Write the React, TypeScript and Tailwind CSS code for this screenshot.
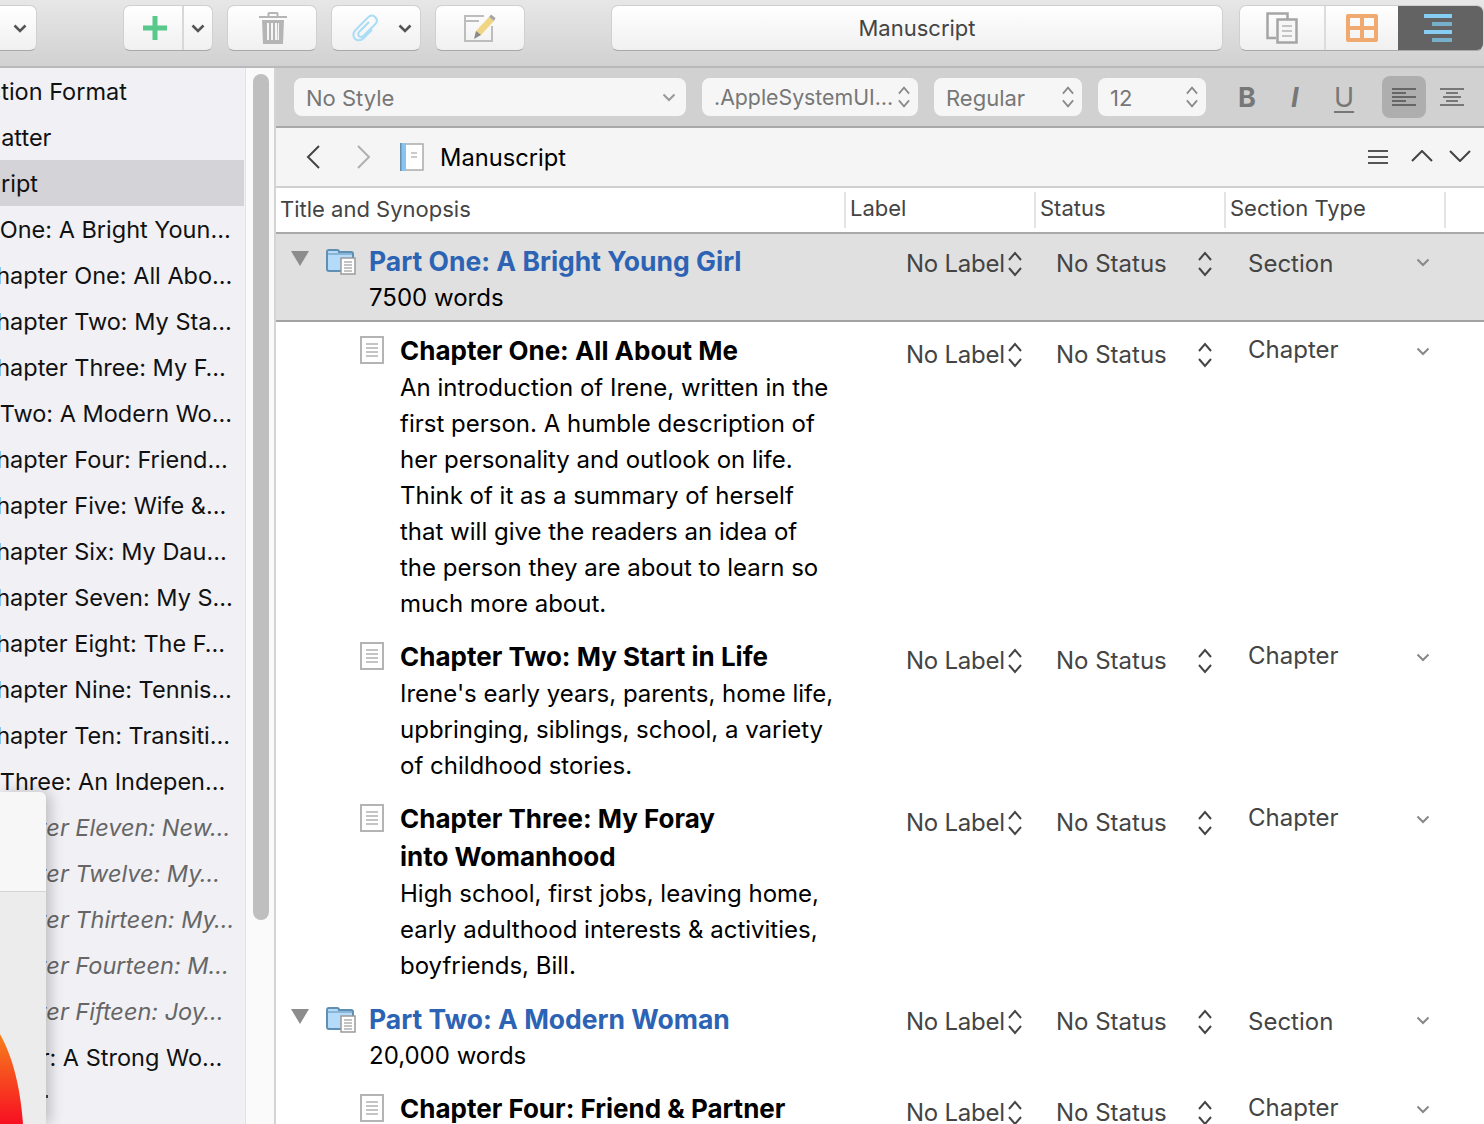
import type { ReactNode } from "react";

const sidebarRows: { text: string; ml: string; italic?: boolean; selected?: boolean }[] = [
  { text: "Section Format", ml: "ml-[-41px]" },
  { text: "Front Matter", ml: "ml-[-84px]" },
  { text: "Manuscript", ml: "ml-[-87px]", selected: true },
  { text: "Part One: A Bright Youn…", ml: "ml-[-52px]" },
  { text: "Chapter One: All Abo…", ml: "ml-[-21px]" },
  { text: "Chapter Two: My Sta…", ml: "ml-[-21px]" },
  { text: "Chapter Three: My F…", ml: "ml-[-21px]" },
  { text: "Part Two: A Modern Wo…", ml: "ml-[-52px]" },
  { text: "Chapter Four: Friend…", ml: "ml-[-21px]" },
  { text: "Chapter Five: Wife &…", ml: "ml-[-21px]" },
  { text: "Chapter Six: My Dau…", ml: "ml-[-21px]" },
  { text: "Chapter Seven: My S…", ml: "ml-[-21px]" },
  { text: "Chapter Eight: The F…", ml: "ml-[-21px]" },
  { text: "Chapter Nine: Tennis…", ml: "ml-[-21px]" },
  { text: "Chapter Ten: Transiti…", ml: "ml-[-21px]" },
  { text: "Part Three: An Indepen…", ml: "ml-[-52px]" },
  { text: "Chapter Eleven: New…", ml: "ml-[-21px]", italic: true },
  { text: "Chapter Twelve: My…", ml: "ml-[-21px]", italic: true },
  { text: "Chapter Thirteen: My…", ml: "ml-[-21px]", italic: true },
  { text: "Chapter Fourteen: M…", ml: "ml-[-21px]", italic: true },
  { text: "Chapter Fifteen: Joy…", ml: "ml-[-21px]", italic: true },
  { text: "Part Four: A Strong Wo…", ml: "ml-[-52px]" },
];

function Chevron({ className = "", thick }: { className?: string; thick?: boolean }) {
  return (
    <svg width="14" height="9" viewBox="0 0 14 9" fill="none" className={className}>
      <path d="M1.5 1.500 7 7l5.500-5.500" stroke="currentColor" strokeWidth={thick ? 2.6 : 2} />
    </svg>
  );
}

function UpDown({ className = "text-[#444]" }: { className?: string }) {
  return (
    <svg width="16" height="26" viewBox="0 0 16 26" fill="none" className={className}>
      <path d="M2 9l6-7 6 7M2 17l6 7 6-7" stroke="currentColor" strokeWidth="2" />
    </svg>
  );
}

function DocIcon() {
  return (
    <svg width="24" height="28" viewBox="0 0 24 28" fill="none">
      <rect x="1" y="1" width="22" height="26" fill="#fff" stroke="#b4b4b4" strokeWidth="2" />
      <path d="M6 8h12M6 12h12M6 16h12M6 20h12" stroke="#c4c4c4" strokeWidth="2" />
    </svg>
  );
}

function FolderIcon() {
  return (
    <svg width="30" height="28" viewBox="0 0 30 28" fill="none">
      <path d="M1 5a2 2 0 0 1 2-2h8a2 2 0 0 1 2 2h12a2 2 0 0 1 2 2v15a2 2 0 0 1-2 2H3a2 2 0 0 1-2-2z" fill="#b5dbfb" stroke="#5f8fb3" strokeWidth="2" />
      <path d="M2 7h24" stroke="#5f8fb3" strokeWidth="1" />
      <rect x="15" y="11" width="14" height="16" fill="#fff" stroke="#9a9a9a" strokeWidth="1.5" />
      <path d="M18 15h8M18 18h8M18 21h8M18 24h8" stroke="#b0b0b0" strokeWidth="1.5" />
    </svg>
  );
}

function ToolbarButton({ className, children }: { className: string; children: ReactNode }) {
  return (
    <div className={`h-[46px] shrink-0 flex items-center justify-center rounded-[7px] border border-[#d0d0d0] border-b-[#a9a9a9] bg-gradient-to-b from-white to-[#f0f0f0] ${className}`}>
      {children}
    </div>
  );
}

function FormatSelect({ className, label, labelClass = "", children }: { className: string; label: string; labelClass?: string; children: ReactNode }) {
  return (
    <div className={`h-[38px] shrink-0 flex items-center justify-between rounded-[8px] bg-[#f6f6f6] text-[#777] ${className}`}>
      <span className={`whitespace-nowrap pt-[1px] ${labelClass}`}>{label}</span>
      {children}
    </div>
  );
}

function OutlineRow({
  title,
  lines,
  part,
  type,
  height,
  textTop,
  metaTop,
  typeTop,
  chevTop,
  border,
}: {
  title: string[];
  lines: string[];
  part?: boolean;
  type: string;
  height: string;
  textTop: string;
  metaTop: string;
  typeTop: string;
  chevTop: string;
  border?: boolean;
}) {
  return (
    <div className={`flex ${height} shrink-0 ${part && border ? "bg-[#e0e0e0] border-b-2 border-[#a3a3a3]" : ""}`}>
      <div className={`w-[630px] shrink-0 flex ${textTop} ${part ? "pl-[15px]" : "pl-[84px]"}`}>
        {part ? (
          <>
            <svg width="18" height="16" viewBox="0 0 18 16" className="mt-[9px] shrink-0">
              <path d="M0 0h18L9 15z" fill="#8c8c8c" />
            </svg>
            <div className="ml-[17px] mt-[5px] shrink-0"><FolderIcon /></div>
          </>
        ) : (
          <div className="mt-[4px] shrink-0"><DocIcon /></div>
        )}
        <div className={part ? "ml-[13px]" : "ml-[16px]"}>
          {title.map((t) => (
            <div key={t} className={`h-[38px] leading-[38px] font-bold whitespace-nowrap ${part ? "text-[#2c63b4] text-[26.5px]" : "text-black text-[26px]"}`}>
              {t}
            </div>
          ))}
          {lines.map((l) => (
            <div key={l} className="h-[36px] leading-[36px] text-black whitespace-nowrap">{l}</div>
          ))}
        </div>
      </div>
      <div className={`flex items-start text-[#444] ${metaTop}`}>
        <span className="w-[101px] h-[26px] leading-[26px] whitespace-nowrap tracking-[-0.25px]">No Label</span>
        <UpDown />
        <span className="ml-[33px] w-[141px] h-[26px] leading-[26px] whitespace-nowrap">No Status</span>
        <UpDown />
      </div>
      <div className={`ml-[35px] w-[168px] text-[#444] whitespace-nowrap ${typeTop}`}>{type}</div>
      <Chevron className={`text-[#888] ${chevTop}`} />
    </div>
  );
}

export default function App() {
  return (
    <div className="relative w-[1484px] h-[1124px] overflow-hidden flex flex-col bg-white font-['Inter','Liberation_Sans',sans-serif] text-[24px] leading-none">
      {/* toolbar */}
      <div className="h-[68px] shrink-0 flex items-start pt-[5px] bg-gradient-to-b from-[#e8e7e8] to-[#d2d1d2] border-b-2 border-[#b9b9b9]">
        <ToolbarButton className="w-[44px] ml-[-7px] justify-end pr-[9px] text-[#555]"><Chevron thick /></ToolbarButton>
        <ToolbarButton className="w-[90px] ml-[86px]">
          <div className="w-[60px] flex justify-center border-r-2 border-[#d8d8d8] h-full items-center pl-[4px]">
            <svg width="24" height="24" viewBox="0 0 24 24"><path d="M9.5 0h5v9.500h9.500v5h-9.500v9.500h-5v-9.500h-9.500v-5h9.500z" fill="#58c98a" /></svg>
          </div>
          <div className="flex-1 flex justify-center text-[#555]"><Chevron thick /></div>
        </ToolbarButton>
        <ToolbarButton className="w-[90px] ml-[14px]">
          <svg width="28" height="32" viewBox="0 0 28 32" fill="#b5b5b5" className="ml-[2px]">
            <path d="M10 0h8a1.500 1.500 0 0 1 1.500 1.500V4H28v2H0V4h8.500V1.500A1.500 1.500 0 0 1 10 0zm.5 2v2h7V2z" fillRule="evenodd" />
            <path d="M3 8h22l-1 24H4zM8 11v17h2V11zM12 11v17h2V11zM16 11v17h2V11zM20 11v17h-1.500L19 11z" fillRule="evenodd" />
          </svg>
        </ToolbarButton>
        <ToolbarButton className="w-[90px] ml-[14px]">
          <svg width="26" height="28" viewBox="0 0 26 28" fill="none" className="ml-[12px]">
            <path d="M17 8 7.500 17.500c-1.800 1.800-1.500 3.500-.5 4.500s2.800 1.400 4.500-.3L23 10.500c2.700-2.700 2-5.500.3-7.300s-4.600-2.500-7.300.2L3.500 16c-3 3-2.600 6.700-.6 8.700s5.700 2.400 8.600-.5l8.500-8.500" stroke="#a9dcf6" strokeWidth="2" />
          </svg>
          <Chevron thick className="ml-[20px] text-[#555]" />
        </ToolbarButton>
        <ToolbarButton className="w-[90px] ml-[14px]">
          <svg width="32" height="30" viewBox="0 0 32 30" fill="none">
            <path d="M20 3H1v25h27V13M1 8h14" stroke="#bdbdbd" strokeWidth="2" />
            <path d="M12 18 25 4l5 4-13 14-6 2z" fill="#f0d583" />
            <path d="M25 4l2-2.500 4.500 3.500-1.500 3z" fill="#a5a5a5" />
            <path d="M10 26l2-8 5 4z" fill="#8a8a8a" />
          </svg>
        </ToolbarButton>
        <ToolbarButton className="w-[612px] ml-[86px] text-[22px] text-[#444]">Manuscript</ToolbarButton>
        <div className="ml-[16px] w-[245px] h-[46px] shrink-0 flex rounded-[7px] overflow-hidden border border-[#d0d0d0] border-b-[#a9a9a9] bg-gradient-to-b from-white to-[#f0f0f0]">
          <div className="w-[86px] flex items-center justify-center border-r-2 border-[#dcdcdc]">
            <svg width="32" height="32" viewBox="0 0 32 32" fill="none" stroke="#a5a5a5" strokeWidth="2.500">
              <path d="M10 26H1.500V1.500h20V7" />
              <rect x="11.500" y="7.500" width="19" height="23" fill="#f6f6f6" />
              <path d="M16 14h10M16 19h10M16 24h10" stroke="#c4c4c4" strokeWidth="2" />
            </svg>
          </div>
          <div className="w-[72px] flex items-center justify-center">
            <svg width="32" height="28" viewBox="0 0 32 28"><path d="M2 0h28a2 2 0 0 1 2 2v24a2 2 0 0 1-2 2H2a2 2 0 0 1-2-2V2a2 2 0 0 1 2-2zM4 4v8h10V4zm14 0v8h10V4zM4 16v8h10v-8zm14 0v8h10v-8z" fill="#f0a96f" fillRule="evenodd" /></svg>
          </div>
          <div className="flex-1 flex items-center pl-[26px] bg-[#636363]">
            <svg width="28" height="28" viewBox="0 0 28 28">
              <path d="M0 0h28v4H0z" fill="#85cdf2" />
              <path d="M8 8h20v4H8z" fill="#78afca" />
              <path d="M0 16h28v4H0z" fill="#85cdf2" />
              <path d="M8 24h20v4H8z" fill="#78afca" />
            </svg>
          </div>
        </div>
      </div>

      <div className="flex-1 flex min-h-0">
        {/* binder */}
        <div className="w-[246px] shrink-0 bg-[#f0f0f5] overflow-hidden border-r border-[#e2e2e2] text-[23.5px]">
          {sidebarRows.map((r) => (
            <div key={r.text} className={`h-[46px] mr-[1px] pt-[1px] flex items-center overflow-hidden whitespace-nowrap ${r.selected ? "bg-[#d3d3d8]" : ""} ${r.italic ? "italic text-[#666]" : "text-[#111]"}`}>
              <span className={r.ml}>{r.text}</span>
            </div>
          ))}
          <div className="h-[46px] pl-[46px] pt-[15px]">
            <div className="w-[2px] h-[3px] bg-[#444]" />
          </div>
        </div>
        <div className="w-[30px] shrink-0 bg-[#fafafa] pl-[7px] pt-[6px] border-r-2 border-[#d4d4d4]">
          <div className="w-[16px] h-[846px] rounded-full bg-[#bfbfbf]" />
        </div>

        {/* editor */}
        <div className="flex-1 min-w-0 flex flex-col overflow-hidden">
          <div className="h-[60px] shrink-0 flex items-center pl-[18px] bg-[#d1d1d1] border-b-2 border-[#a8a8a8] text-[22px]">
            <FormatSelect className="w-[392px] pl-[12px] pr-[10px]" label="No Style"><Chevron className="text-[#999]" /></FormatSelect>
            <FormatSelect className="w-[216px] ml-[16px] pl-[12px] pr-[6px]" label=".AppleSystemUI…" labelClass="text-[21.3px]"><UpDown className="text-[#888] scale-[0.85]" /></FormatSelect>
            <FormatSelect className="w-[148px] ml-[16px] pl-[12px] pr-[6px]" label="Regular"><UpDown className="text-[#888] scale-[0.85]" /></FormatSelect>
            <FormatSelect className="w-[108px] ml-[16px] pl-[12px] pr-[6px]" label="12"><UpDown className="text-[#888] scale-[0.85]" /></FormatSelect>
            <span className="ml-[32px] w-[18px] font-bold text-[#777] text-[27px]">B</span>
            <span className="ml-[35px] w-[12px] font-bold italic text-[#777] text-[27px]">I</span>
            <span className="ml-[31px] w-[22px] underline underline-offset-[4px] text-[#777] text-[27px]">U</span>
            <div className="ml-[26px] w-[44px] h-[42px] rounded-[8px] bg-[#aeaeae] flex items-center justify-center">
              <svg width="24" height="18" viewBox="0 0 24 18" fill="none" stroke="#666" strokeWidth="2"><path d="M0 1h24M0 5h14M0 9h24M0 13h14M0 17h24" /></svg>
            </div>
            <svg width="24" height="18" viewBox="0 0 24 18" fill="none" stroke="#777" strokeWidth="2" className="ml-[14px]"><path d="M0 1h24M6 5h12M3 9h18M6 13h12M0 17h24" /></svg>
          </div>

          <div className="h-[60px] shrink-0 flex items-center bg-[#f5f5f5] border-b-2 border-[#d0d0d0]">
            <svg width="14" height="24" viewBox="0 0 14 24" fill="none" stroke="#444" strokeWidth="2" className="ml-[30px]"><path d="M13 1 2 12l11 11" /></svg>
            <svg width="14" height="24" viewBox="0 0 14 24" fill="none" stroke="#b0b0b0" strokeWidth="2" className="ml-[37px]"><path d="M1 1l11 11L1 23" /></svg>
            <svg width="24" height="28" viewBox="0 0 24 28" fill="none" className="ml-[29px]">
              <rect x="1" y="1" width="22" height="26" fill="#fff" stroke="#aaa" strokeWidth="1.500" />
              <rect x="0" y="0" width="6" height="28" fill="#86c5f2" />
              <rect x="0" y="0" width="1.500" height="28" fill="#6b8fa8" />
              <path d="M11 10h6M11 14h6" stroke="#bbb" strokeWidth="1.500" />
            </svg>
            <span className="ml-[16px] mt-[2px] text-black text-[23.7px]">Manuscript</span>
            <svg width="20" height="16" viewBox="0 0 20 16" fill="none" stroke="#555" strokeWidth="2" className="ml-auto mr-[-1px]"><path d="M0 2h20M0 8h20M0 14h20" /></svg>
            <svg width="22" height="12" viewBox="0 0 22 12" fill="none" stroke="#444" strokeWidth="2" className="ml-[24px] mb-[2px]"><path d="M1 11 11 1l10 10" /></svg>
            <svg width="22" height="12" viewBox="0 0 22 12" fill="none" stroke="#444" strokeWidth="2" className="ml-[16px] mr-[13px] mb-[2px]"><path d="M1 1l10 10L21 1" /></svg>
          </div>

          <div className="h-[46px] shrink-0 flex items-center border-b-2 border-[#a9a9a9] text-[#444] text-[22px] pl-[4px]">
            <span className="w-[564px] pb-[2px]">Title and Synopsis</span>
            <span className="w-[190px] pl-[4px] pb-[5px] h-[36px] flex items-center border-l-2 border-[#e4e4e4]">Label</span>
            <span className="w-[190px] pl-[4px] pb-[5px] h-[36px] flex items-center border-l-2 border-[#e4e4e4]">Status</span>
            <span className="w-[222px] pl-[4px] pb-[5px] h-[36px] flex items-center border-l-2 border-r-2 border-[#e4e4e4]">Section Type</span>
          </div>

          <OutlineRow part border title={["Part One: A Bright Young Girl"]} lines={["7500 words"]} type="Section" height="h-[88px]" textTop="pt-[8px]" metaTop="pt-[17px]" typeTop="pt-[18px]" chevTop="mt-[24px]" />
          <OutlineRow
            title={["Chapter One: All About Me"]}
            lines={[
              "An introduction of Irene, written in the",
              "first person. A humble description of",
              "her personality and outlook on life.",
              "Think of it as a summary of herself",
              "that will give the readers an idea of",
              "the person they are about to learn so",
              "much more about.",
            ]}
            type="Chapter"
            height="h-[306px]"
            textTop="pt-[10px]"
            metaTop="pt-[20px]"
            typeTop="pt-[16px]"
            chevTop="mt-[25px]"
          />
          <OutlineRow
            title={["Chapter Two: My Start in Life"]}
            lines={["Irene's early years, parents, home life,", "upbringing, siblings, school, a variety", "of childhood stories."]}
            type="Chapter"
            height="h-[162px]"
            textTop="pt-[10px]"
            metaTop="pt-[20px]"
            typeTop="pt-[16px]"
            chevTop="mt-[25px]"
          />
          <OutlineRow
            title={["Chapter Three: My Foray", "into Womanhood"]}
            lines={["High school, first jobs, leaving home,", "early adulthood interests & activities,", "boyfriends, Bill."]}
            type="Chapter"
            height="h-[198px]"
            textTop="pt-[10px]"
            metaTop="pt-[20px]"
            typeTop="pt-[16px]"
            chevTop="mt-[25px]"
          />
          <OutlineRow part title={["Part Two: A Modern Woman"]} lines={["20,000 words"]} type="Section" height="h-[92px]" textTop="pt-[12px]" metaTop="pt-[21px]" typeTop="pt-[22px]" chevTop="mt-[28px]" />
          <OutlineRow title={["Chapter Four: Friend & Partner"]} lines={[]} type="Chapter" height="h-[40px]" textTop="pt-[10px]" metaTop="pt-[20px]" typeTop="pt-[16px]" chevTop="mt-[25px]" />
        </div>
      </div>

      {/* window lying over the binder */}
      <div className="absolute left-0 top-[792px] w-[46px] h-[332px] rounded-tr-[6px] overflow-hidden bg-[#ececec] shadow-[4px_0_14px_rgba(0,0,0,0.22)]">
        <div className="h-[100px] bg-[#f7f7f7] border-b border-[#d4d4d4]" />
        <svg width="24" height="90" viewBox="0 0 24 90" className="absolute left-0 bottom-0">
          <defs>
            <linearGradient id="dock" x1="0" y1="0" x2="0" y2="1">
              <stop offset="0" stopColor="#f77f1c" />
              <stop offset="1" stopColor="#f70f22" />
            </linearGradient>
          </defs>
          <path d="M0 0C12 22 20 50 23 90H0z" fill="url(#dock)" />
        </svg>
      </div>
    </div>
  );
}
